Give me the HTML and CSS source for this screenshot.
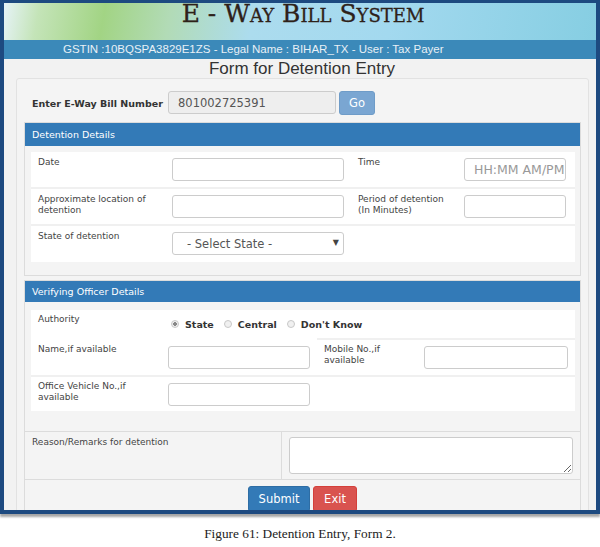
FILE: index.html
```html
<!DOCTYPE html>
<html lang="en">
<head>
  <meta charset="UTF-8">
  <title>Detention Entry</title>
  <link rel="stylesheet" href="styles.css">
</head>
<body>
  <div class="frame">
    <div class="banner">
      <span class="brand">E - Way Bill System</span>
    </div>
    <div class="userbar">GSTIN :10BQSPA3829E1ZS - Legal Name : BIHAR_TX - User : Tax Payer</div>

    <div class="page">
      <h1>Form for Detention Entry</h1>

      <div class="well">
        <div class="ewb-row">
          <label class="ewb-label">Enter E-Way Bill Number</label>
          <input class="ewb-input" type="text" value="801002725391" disabled>
          <button class="btn btn-go" type="button">Go</button>
        </div>

        <!-- detention -->
        <div class="panel">
          <div class="panel-head">Detention Details</div>
          <div class="panel-body">
            <div class="grid grid-det">
              <div class="cell lbl">Date</div>
              <div class="cell"><input class="field" type="text"></div>
              <div class="cell lbl">Time</div>
              <div class="cell"><input class="field field-time" type="text" placeholder="HH:MM AM/PM"></div>

              <div class="cell lbl">Approximate location of detention</div>
              <div class="cell"><input class="field" type="text"></div>
              <div class="cell lbl">Period of detention (In Minutes)</div>
              <div class="cell"><input class="field" type="text"></div>

              <div class="cell lbl">State of detention</div>
              <div class="cell">
                <div class="select-wrap">
                  <select class="field select">
                    <option>- Select State -</option>
                  </select>
                </div>
              </div>
              <div class="cell"></div>
              <div class="cell"></div>
            </div>
          </div>
        </div>

        <!-- officer -->
        <div class="panel panel-officer">
          <div class="panel-head">Verifying Officer Details</div>
          <div class="panel-body">
            <div class="grid grid-off">
              <div class="cell lbl">Authority</div>
              <div class="cell radios span3">
                <label class="radio"><input type="radio" name="auth" checked> State</label>
                <label class="radio"><input type="radio" name="auth"> Central</label>
                <label class="radio"><input type="radio" name="auth"> Don't Know</label>
              </div>

              <div class="cell lbl">Name,if available</div>
              <div class="cell"><input class="field" type="text"></div>
              <div class="cell lbl">Mobile No.,if available</div>
              <div class="cell"><input class="field" type="text"></div>

              <div class="cell lbl">Office Vehicle No.,if available</div>
              <div class="cell"><input class="field" type="text"></div>
              <div class="cell"></div>
              <div class="cell"></div>
            </div>
          </div>
        </div>

        <div class="remarks">
          <div class="remarks-lbl">Reason/Remarks for detention</div>
          <div class="remarks-field"><textarea class="field area"></textarea></div>
        </div>

        <div class="actions">
          <button class="btn btn-submit" type="button">Submit</button>
          <button class="btn btn-exit" type="button">Exit</button>
        </div>
      </div>
    </div>
  </div>

  <p class="caption">Figure 61: Detention Entry, Form 2.</p>
</body>
</html>
```

FILE: styles.css
```css
* {
  margin: 0;
  padding: 0;
  box-sizing: border-box;
}

body {
  background: #fff;
  font-family: "DejaVu Sans", Verdana, sans-serif;
  color: #333;
}

.frame {
  width: 600px;
  height: 514px;
  border-style: solid;
  border-color: #1d4a80;
  border-width: 3px 4px 4px 4px;
  box-shadow: 0 3px 2px rgba(0, 0, 0, 0.35);
  overflow: hidden;
  background: #f2f2f2;
}

.banner {
  height: 37px;
  background: linear-gradient(100deg, #e6f3f7 0%, #c4e4b8 6%, #a2d484 17%, #b2dbb6 28%, #acdcee 42%, #a3d9ef 65%, #86cee2 100%);
  text-align: center;
}

.brand {
  display: inline-block;
  font-family: "DejaVu Serif", "Liberation Serif", serif;
  font-variant: small-caps;
  font-size: 25px;
  line-height: 22px;
  color: #2e2119;
  margin-left: 6px;
  -webkit-text-stroke: 0.3px #2e2119;
}

.userbar {
  height: 19px;
  background: #3b89b9;
  color: #e8f0f6;
  font-family: "Liberation Sans", Arial, sans-serif;
  font-size: 11.5px;
  line-height: 19px;
  padding-left: 59px;
}

.page {
  background: #f2f2f2;
}

h1 {
  font-family: "Liberation Sans", Arial, sans-serif;
  font-weight: normal;
  font-size: 17px;
  line-height: 19px;
  text-align: center;
  color: #333;
  padding-left: 4px;
}

.well {
  margin: 0 7px 0 12px;
  background: #f4f4f4;
  border: 1px solid #e2e2e2;
  border-radius: 3px;
  padding: 12px 7px 0;
}

.ewb-row {
  display: flex;
  align-items: center;
  height: 24px;
  margin-bottom: 7px;
}

.ewb-label {
  width: 144px;
  padding-left: 8px;
  font-weight: bold;
  font-size: 9.5px;
  color: #333;
}

.ewb-input {
  width: 168px;
  height: 23px;
  border: 1px solid #ccc;
  border-radius: 3px;
  background: #eee;
  font-family: "DejaVu Sans", sans-serif;
  font-size: 11.5px;
  color: #555;
  padding: 0 9px;
  margin-top: -1px;
}

.btn {
  border: 1px solid transparent;
  border-radius: 3px;
  color: #fff;
  font-family: "DejaVu Sans", sans-serif;
  font-size: 11.5px;
  cursor: pointer;
}

.btn-go {
  width: 36px;
  height: 24px;
  margin-left: 3px;
  background: #7aa6d2;
  border-color: #6f9cc8;
}

.panel {
  border: 1px solid #dcdcdc;
  margin-bottom: 4px;
}

.panel-head {
  background: #337ab7;
  color: #fff;
  font-size: 9.5px;
  height: 23px;
  line-height: 23px;
  padding-left: 7px;
}

.panel-officer .panel-head {
  height: 21px;
  line-height: 21px;
}

.panel-body {
  padding: 6px 6px 14px;
  background: #f4f4f4;
}

.panel-officer {
  margin-bottom: 0;
  border-bottom: none;
}

.panel-officer .panel-body {
  padding: 8px 6px 20px;
}

.grid {
  display: grid;
  background: #fff;
  row-gap: 2px;
}

.grid-det {
  grid-template-columns: 134px 186px 106px 118px;
  grid-auto-rows: 35px;
}

.grid-det .cell:nth-child(4n) {
  padding-right: 9px;
}

.grid-det .cell:nth-child(n+9) {
  height: 36px;
}

.grid-off {
  grid-template-columns: 130px 156px 100px 158px;
  grid-template-rows: 28px 35px 34px;
}

.cell {
  background: #fff;
  padding: 6px 7px 0;
  box-shadow: 0 -2px 0 #f0f0f0;
}

.grid .cell:nth-child(-n+4) {
  box-shadow: none;
}

.grid-off .cell:nth-child(-n+2) {
  box-shadow: none;
}

.lbl {
  font-size: 9px;
  line-height: 11px;
  color: #444;
  padding-top: 5px;
}

.field {
  display: block;
  width: 100%;
  height: 23px;
  border: 1px solid #ccc;
  border-radius: 3px;
  background: #fff;
  font-family: "DejaVu Sans", sans-serif;
  font-size: 11.5px;
  color: #555;
  padding: 0 9px;
}

.field::placeholder {
  color: #999;
}

.field-time {
  font-size: 12.5px;
  padding-right: 0;
  text-overflow: clip;
}

.select-wrap {
  position: relative;
}

.select {
  appearance: none;
  -webkit-appearance: none;
  padding-left: 14px;
  font-size: 11.5px;
}

.select-wrap::after {
  content: '▼';
  position: absolute;
  right: 5px;
  top: 6px;
  font-size: 8px;
  color: #444;
  pointer-events: none;
}

.grid-off .cell {
  padding-top: 6px;
}

.grid-off .lbl {
  padding-top: 4px;
}

.grid-off .radios {
  display: flex;
  align-items: center;
  gap: 10px;
  padding: 0 0 0 10px;
  height: 28px;
}

.span3 {
  grid-column: span 3;
}

.radio {
  display: flex;
  align-items: center;
  gap: 5px;
  font-size: 9.5px;
  font-weight: bold;
  color: #333;
}

.radio input {
  appearance: none;
  -webkit-appearance: none;
  width: 8px;
  height: 8px;
  border: 1px solid #c8c8c8;
  border-radius: 50%;
  background: #f0f0f0;
  margin-right: 1px;
}

.radio input:checked {
  background: radial-gradient(circle, #888 0 1.6px, #eee 2px);
}

.remarks {
  display: flex;
  border: 1px solid #dcdcdc;
  height: 49px;
}

.remarks-lbl {
  width: 257px;
  border-right: 1px solid #dcdcdc;
  font-size: 9px;
  color: #444;
  padding: 5px 7px 0;
}

.remarks-field {
  flex: 1;
  padding: 5px 7px 0;
}

.area {
  height: 37px;
  resize: vertical;
}

.actions {
  display: flex;
  justify-content: center;
  gap: 3px;
  border: 1px solid #dcdcdc;
  border-top: none;
  padding-top: 6px;
  height: 40px;
}

.btn-submit {
  width: 62px;
  height: 26px;
  background: #337ab7;
  border-color: #2e6da4;
}

.btn-exit {
  width: 44px;
  height: 26px;
  background: #d9534f;
  border-color: #d43f3a;
}

.caption {
  margin-top: 12px;
  text-align: center;
  font-family: "Liberation Serif", "Times New Roman", serif;
  font-size: 13.3px;
  color: #222;
}
```
